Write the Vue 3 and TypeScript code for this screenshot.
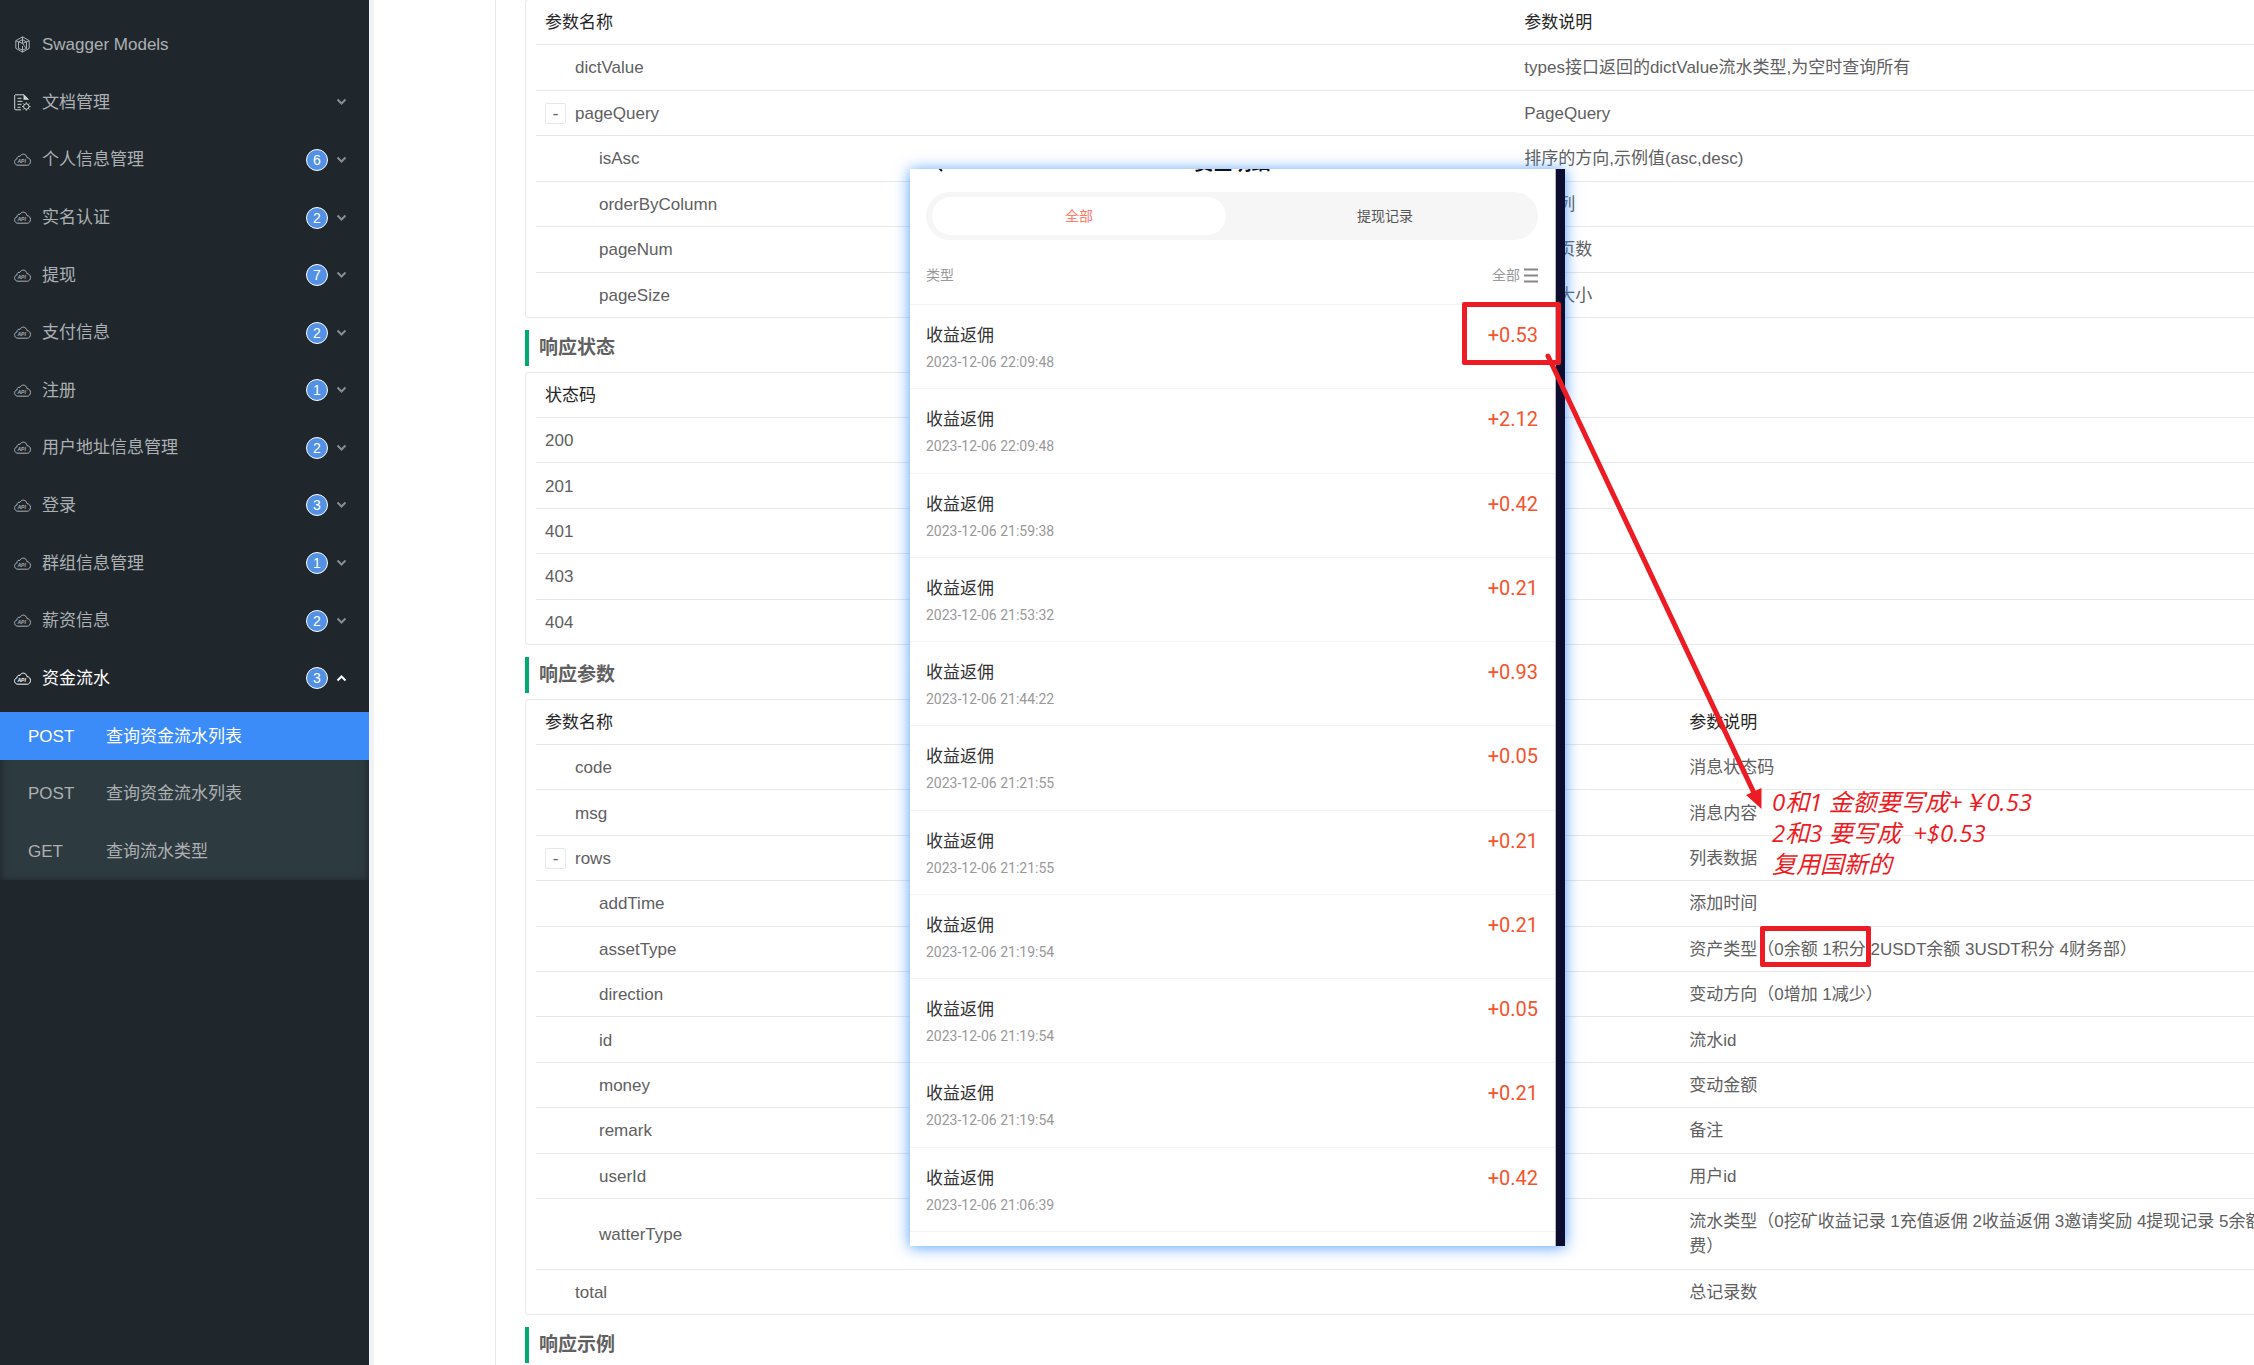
<script setup lang="ts">
interface MenuEntry {
  label: string
  icon: 'models' | 'document' | 'cloud'
  count?: number
  open?: boolean
}

interface Param {
  name: string
  description?: string
  level: 0 | 1
  expandable?: boolean
}

const menu: MenuEntry[] = [
  { label: 'Swagger Models', icon: 'models' },
  { label: '文档管理', icon: 'document' },
  { label: '个人信息管理', icon: 'cloud', count: 6 },
  { label: '实名认证', icon: 'cloud', count: 2 },
  { label: '提现', icon: 'cloud', count: 7 },
  { label: '支付信息', icon: 'cloud', count: 2 },
  { label: '注册', icon: 'cloud', count: 1 },
  { label: '用户地址信息管理', icon: 'cloud', count: 2 },
  { label: '登录', icon: 'cloud', count: 3 },
  { label: '群组信息管理', icon: 'cloud', count: 1 },
  { label: '薪资信息', icon: 'cloud', count: 2 },
  { label: '资金流水', icon: 'cloud', count: 3, open: true },
]

const endpoints = [
  { method: 'POST', label: '查询资金流水列表', active: true },
  { method: 'POST', label: '查询资金流水列表', active: false },
  { method: 'GET', label: '查询流水类型', active: false },
]

const requestParams: Param[] = [
  { name: 'dictValue', description: 'types接口返回的dictValue流水类型,为空时查询所有', level: 0 },
  { name: 'pageQuery', description: 'PageQuery', level: 0, expandable: true },
  { name: 'isAsc', description: '排序的方向,示例值(asc,desc)', level: 1 },
  { name: 'orderByColumn', description: '排序列', level: 1 },
  { name: 'pageNum', description: '当前页数', level: 1 },
  { name: 'pageSize', description: '分页大小', level: 1 },
]

const statusCodes = [200, 201, 401, 403, 404]

const responseParams: Param[] = [
  { name: 'code', description: '消息状态码', level: 0 },
  { name: 'msg', description: '消息内容', level: 0 },
  { name: 'rows', description: '列表数据', level: 0, expandable: true },
  { name: 'addTime', description: '添加时间', level: 1 },
  { name: 'assetType', description: '资产类型（0余额 1积分 2USDT余额 3USDT积分 4财务部）', level: 1 },
  { name: 'direction', description: '变动方向（0增加 1减少）', level: 1 },
  { name: 'id', description: '流水id', level: 1 },
  { name: 'money', description: '变动金额', level: 1 },
  { name: 'remark', description: '备注', level: 1 },
  { name: 'userId', description: '用户id', level: 1 },
  {
    name: 'watterType',
    description: '流水类型（0挖矿收益记录 1充值返佣 2收益返佣 3邀请奖励 4提现记录 5余额\n费）',
    level: 1,
  },
  { name: 'total', description: '总记录数', level: 0 },
]

const records = [
  { time: '2023-12-06 22:09:48', amount: '+0.53' },
  { time: '2023-12-06 22:09:48', amount: '+2.12' },
  { time: '2023-12-06 21:59:38', amount: '+0.42' },
  { time: '2023-12-06 21:53:32', amount: '+0.21' },
  { time: '2023-12-06 21:44:22', amount: '+0.93' },
  { time: '2023-12-06 21:21:55', amount: '+0.05' },
  { time: '2023-12-06 21:21:55', amount: '+0.21' },
  { time: '2023-12-06 21:19:54', amount: '+0.21' },
  { time: '2023-12-06 21:19:54', amount: '+0.05' },
  { time: '2023-12-06 21:19:54', amount: '+0.21' },
  { time: '2023-12-06 21:06:39', amount: '+0.42' },
]

const noteLines = ['0和1 金额要写成+￥0.53', '2和3 要写成  +$0.53', '复用国新的']
</script>

<template>
  <div class="page">
    <nav class="sidebar">
      <ul class="menu">
        <li v-for="item in menu" :key="item.label">
          <button type="button" class="menu-item" :class="{ open: item.open }">
            <svg v-if="item.icon === 'models'" class="icon" viewBox="0 0 17 17" aria-hidden="true">
              <path d="M8.500.8l6.700 3.900v7.600L8.500 16.200 1.800 12.300V4.700z M1.800 4.700l6.700 2.800 6.700-2.800 M8.500.8v6.700 M4.500 6v6.500l4 1.500 4-1.500V6 L8.500 3.500z M8.500 7.500l4 5 M8.500 10v6" />
            </svg>
            <svg v-else-if="item.icon === 'document'" class="icon doc" viewBox="0 0 17 17" aria-hidden="true">
              <path d="M14 6V5L10 .8H1.500Q.7.800.700 1.600v13.300q0 .9.900.900H7" />
              <path d="M3.500 4.300h4 M3.500 7.300h5 M3.500 10.300h4 M3.500 13.300h3" />
              <path class="fill" d="M9.500.5v5.200h5z" />
              <circle cx="12.300" cy="12.500" r="2.700" />
              <path d="M12.300 8.300v1.400 M12.300 15.300v1.400 M8.100 12.500h1.400 M15.100 12.500h1.400 M9.300 9.500l1 1 M14.300 14.500l1 1 M15.300 9.500l-1 1 M10.300 14.500l-1 1" />
            </svg>
            <svg v-else class="icon" viewBox="0 0 17 17" aria-hidden="true">
              <path d="M4 14.200C-.4 14.200-.4 8.400 3 7.900 2.900 5.600 4.700 4.800 6 5.400 7.500 2 12.300 2.300 13 6.700c1.900-.1 3.500 1.600 3.500 3.700s-1.400 3.800-3 3.800z" />
              <text x="3.500" y="11.500">API</text>
            </svg>
            <span class="menu-label">{{ item.label }}</span>
            <span v-if="item.count" class="badge">{{ item.count }}</span>
            <svg v-if="item.icon !== 'models'" class="chevron" viewBox="0 0 11 8" aria-hidden="true">
              <path :d="item.open ? 'M1.500 6.500l4-4 4 4' : 'M1.500 1.500l4 4 4-4'" />
            </svg>
          </button>
        </li>
      </ul>
      <div class="submenu">
        <ul class="endpoints">
          <li v-for="(endpoint, i) in endpoints" :key="i">
            <a href="#" class="endpoint" :class="{ active: endpoint.active }">
              <span class="method">{{ endpoint.method }}</span>
              <span>{{ endpoint.label }}</span>
            </a>
          </li>
        </ul>
      </div>
    </nav>

    <main class="content">
      <div class="document">
        <div class="panel first">
          <table class="request">
            <colgroup>
              <col class="name" />
              <col />
            </colgroup>
            <thead>
              <tr><th>参数名称</th><th>参数说明</th></tr>
            </thead>
            <tbody>
              <tr v-for="param in requestParams" :key="param.name">
                <td>
                  <div class="param" :class="{ nested: param.level, expandable: param.expandable }">
                    <button v-if="param.expandable" type="button" class="expander">-</button>
                    <span>{{ param.name }}</span>
                  </div>
                </td>
                <td>{{ param.description }}</td>
              </tr>
            </tbody>
          </table>
        </div>

        <h2>响应状态</h2>
        <div class="panel">
          <table class="status">
            <thead>
              <tr><th>状态码</th></tr>
            </thead>
            <tbody>
              <tr v-for="code in statusCodes" :key="code"><td>{{ code }}</td></tr>
            </tbody>
          </table>
        </div>

        <h2>响应参数</h2>
        <div class="panel">
          <table class="response">
            <colgroup>
              <col class="name" />
              <col />
            </colgroup>
            <thead>
              <tr><th>参数名称</th><th>参数说明</th></tr>
            </thead>
            <tbody>
              <tr v-for="param in responseParams" :key="param.name">
                <td>
                  <div class="param" :class="{ nested: param.level, expandable: param.expandable }">
                    <button v-if="param.expandable" type="button" class="expander">-</button>
                    <span>{{ param.name }}</span>
                  </div>
                </td>
                <td>{{ param.description }}</td>
              </tr>
            </tbody>
          </table>
        </div>

        <h2>响应示例</h2>
      </div>
    </main>

    <section class="phone">
      <div class="screen">
        <header class="phone-title">
          <svg class="back" viewBox="0 0 12 20" aria-hidden="true"><path d="M10 2L2 10l8 8" /></svg>
          <span>资金明细</span>
        </header>
        <div class="tabs">
          <button type="button" class="tab selected">全部</button>
          <button type="button" class="tab">提现记录</button>
        </div>
        <div class="filter">
          <span>类型</span>
          <button type="button" class="filter-button">
            全部
            <svg viewBox="0 0 14 15" aria-hidden="true"><path d="M0 1.500h14M0 7.500h14M0 13.500h14" /></svg>
          </button>
        </div>
        <ul class="records">
          <li v-for="(record, i) in records" :key="i" class="record">
            <div>
              <div class="record-title">收益返佣</div>
              <time>{{ record.time }}</time>
            </div>
            <span class="amount">{{ record.amount }}</span>
          </li>
        </ul>
      </div>
    </section>

    <svg class="arrow" viewBox="0 0 230 470" aria-hidden="true">
      <path class="shaft" d="M8 16L214 453" />
      <path class="head" d="M206 455L221.500 448V469z" />
    </svg>
    <div class="mark amount-mark"></div>
    <div class="mark type-mark"></div>
    <div class="note">
      <div v-for="line in noteLines" :key="line">{{ line }}</div>
    </div>
  </div>
</template>

<style>
body {
  margin: 0;
}
</style>

<style scoped>
.page {
  position: relative;
  display: flex;
  height: 100vh;
  overflow: hidden;
  background: #fff;
  font: 17px/25px "Liberation Sans", "Noto Sans CJK SC", sans-serif;
  color: #606060;
}

ul {
  list-style: none;
  margin: 0;
  padding: 0;
}

button {
  font: inherit;
  color: inherit;
  border: 0;
  padding: 0;
  background: none;
}

.sidebar {
  flex: 0 0 369px;
  padding-top: 16px;
  box-sizing: border-box;
  background: #1f272d;
  color: #adb0b2;
}

.menu {
  display: grid;
  grid-auto-rows: 1fr;
  min-height: 691px;
}

.menu-item {
  display: flex;
  align-items: center;
  width: 100%;
  height: 100%;
  padding: 0 22px 0 14px;
  text-align: left;
}

.menu-item.open {
  color: #fff;
}

.icon {
  width: 17px;
  height: 17px;
  margin-right: 11px;
  fill: none;
  stroke: currentColor;
  stroke-width: 1;
}

.icon.doc {
  color: #d5d7d8;
}

.icon .fill {
  fill: currentColor;
  stroke: none;
}

.icon text {
  font: italic bold 5px "Liberation Sans", sans-serif;
  fill: currentColor;
  stroke: none;
}

.menu-label {
  flex: 1;
}

.badge {
  width: 20px;
  height: 20px;
  margin-right: 8px;
  border: 1px solid #fff;
  border-radius: 50%;
  background: #5391e4;
  color: #fff;
  font-size: 14px;
  line-height: 20px;
  text-align: center;
}

.chevron {
  width: 11px;
  height: 8px;
  fill: none;
  stroke: currentColor;
  stroke-width: 2;
  opacity: 0.75;
}

.open .chevron {
  opacity: 1;
}

.submenu {
  margin-top: 5px;
  padding-bottom: 5px;
  background: #2d3a40;
  box-shadow: inset 0 2px 8px rgba(0, 0, 0, 0.45);
}

.endpoints {
  display: flex;
  flex-direction: column;
  justify-content: space-between;
  min-height: 163px;
}

.endpoint {
  display: flex;
  align-items: center;
  height: 48px;
  padding-left: 28px;
  color: inherit;
  text-decoration: none;
}

.endpoint.active {
  background: #3b8cf8;
  color: #fff;
}

.method {
  width: 78px;
}

.content {
  flex: 1;
  min-width: 0;
  padding-left: 121px;
  border-left: 5px solid #f0f2f5;
}

.document {
  height: 100%;
  padding-left: 29px;
  border-left: 1px solid #e8e8e8;
  overflow: hidden;
}

.panel {
  padding-left: 10px;
  border: 1px solid #e8e8e8;
  border-right: 0;
  border-radius: 4px 0 0 4px;
}

.panel.first {
  margin-top: -1px;
}

table {
  width: 100%;
  table-layout: fixed;
  border-collapse: separate;
  border-spacing: 0;
}

.request {
  height: 317px;
}

.status {
  height: 271px;
}

.response {
  height: 614px;
}

.request .name {
  width: 57%;
}

.response .name {
  width: 66.6%;
}

th,
td {
  padding: 10px 9px 9px;
  border-bottom: 1px solid #e8e8e8;
  text-align: left;
  vertical-align: middle;
  white-space: pre;
}

th {
  color: #262626;
  font-weight: 400;
}

tbody tr:last-child td {
  border-bottom: 0;
}

.param {
  display: flex;
  align-items: center;
  padding-left: 30px;
}

.param.nested {
  padding-left: 54px;
}

.param.expandable {
  gap: 9px;
  padding-left: 0;
}

.expander {
  box-sizing: border-box;
  width: 21px;
  height: 21px;
  border: 1px solid #e8e8e8;
  border-radius: 2px;
  line-height: 17px;
}

h2 {
  height: 36px;
  margin: 12px 0 6px;
  padding-left: 10px;
  border-left: 4px solid #00ab6d;
  font-size: 19px;
  line-height: 36px;
}

.phone {
  position: absolute;
  left: 910px;
  top: 169px;
  box-sizing: border-box;
  width: 655px;
  height: 1077px;
  border-right: 9px solid #0d0d2f;
  background: #fff;
  box-shadow: 0 1px 14px rgba(50, 140, 255, 0.85);
  font-family: Roboto, "Noto Sans CJK SC", sans-serif;
}

.screen {
  display: flex;
  flex-direction: column;
  height: 100%;
  border-right: 1px solid #b5b5bd;
  box-sizing: border-box;
  overflow: hidden;
}

.phone-title {
  position: relative;
  height: 23px;
  color: #111;
  font-size: 19px;
  font-weight: 700;
  text-align: center;
}

.phone-title span {
  position: absolute;
  left: 0;
  right: 0;
  bottom: 16px;
}

.back {
  position: absolute;
  left: 22px;
  bottom: 19px;
  width: 12px;
  height: 20px;
  fill: none;
  stroke: #111;
  stroke-width: 2;
}

.tabs {
  display: flex;
  gap: 6px;
  height: 38px;
  margin: 0 17px 0 16px;
  padding: 5px 0 5px 6px;
  border-radius: 24px;
  background: #f6f6f6;
  font-size: 14px;
}

.tab {
  flex: 1;
  color: #555;
}

.tab.selected {
  flex: 0 0 294px;
  border-radius: 20px;
  background: #fff;
  color: #ff7a68;
}

.filter {
  display: flex;
  align-items: center;
  justify-content: space-between;
  height: 58px;
  padding: 6px 17px 0 16px;
  border-bottom: 1px solid #f3f3f3;
  color: #999;
  font-size: 14px;
}

.filter-button {
  display: flex;
  align-items: center;
  gap: 4px;
}

.filter-button svg {
  width: 14px;
  height: 15px;
  stroke: #888;
  stroke-width: 2;
}

.records {
  display: grid;
  grid-auto-rows: 1fr;
  height: 927px;
}

.record {
  display: flex;
  justify-content: space-between;
  padding: 18px 17px 0 16px;
  border-bottom: 1px solid #f3f3f3;
}

.record-title {
  height: 26px;
  color: #333;
}

.record time {
  color: #999;
  font-size: 14px;
}

.amount {
  color: #f5532d;
  font-size: 20px;
}

.arrow {
  position: absolute;
  left: 1540px;
  top: 340px;
  width: 230px;
  height: 470px;
}

.shaft {
  fill: none;
  stroke: #ed1c24;
  stroke-width: 5;
  stroke-linecap: round;
}

.head {
  fill: #ed1c24;
}

.mark {
  position: absolute;
  box-sizing: border-box;
  border: 5px solid #ed1c24;
  border-radius: 2px;
}

.amount-mark {
  left: 1462px;
  top: 302px;
  width: 99px;
  height: 63px;
}

.type-mark {
  left: 1760px;
  top: 926px;
  width: 111px;
  height: 41px;
}

.note {
  position: absolute;
  left: 1772px;
  top: 786px;
  color: #ed1c24;
  font: italic 24px/31px "Open Sans", "Noto Sans CJK SC", sans-serif;
  white-space: pre;
}
</style>
